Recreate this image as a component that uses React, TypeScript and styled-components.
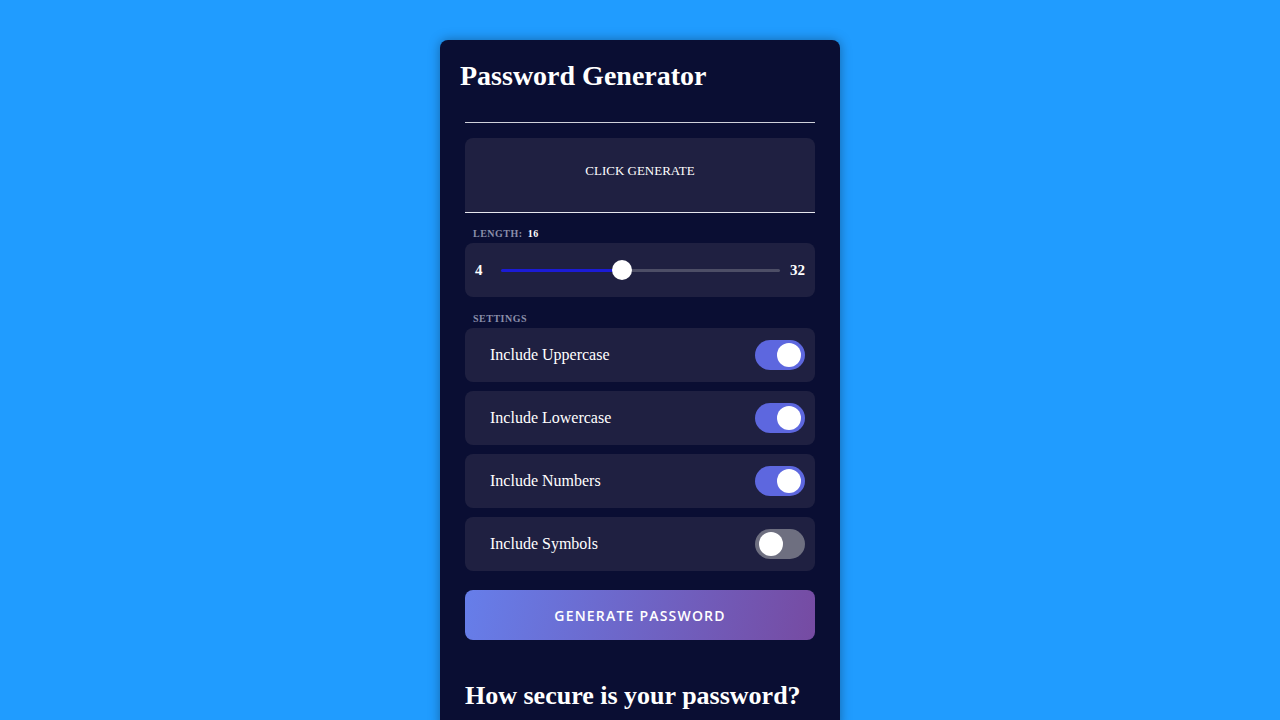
import * as React from "react";
import { useState } from "react";
import styled, { createGlobalStyle } from "styled-components";

const GlobalStyle = createGlobalStyle`
  body {
    margin: 0;
    background: #209cff;
    font-family: "Liberation Serif", "Times New Roman", serif;
    color: #fff;
  }
`;

const Page = styled.div`
  display: flex;
  justify-content: center;
  padding-top: 40px;
  min-height: 680px;
`;

const Card = styled.div`
  width: 400px;
  box-sizing: border-box;
  padding: 20px;
  background: #0a0e33;
  border-radius: 8px;
  box-shadow: 0 0 12px rgba(0, 0, 0, 0.35);
`;

const Title = styled.h1`
  margin: 0;
  font-size: 28px;
  line-height: 32px;
`;

const Body = styled.div`
  padding: 0 5px;
`;

const ResultWrap = styled.div`
  margin-top: 30px;
  border-top: 1px solid #cfd0da;
  padding-top: 15px;
`;

const Result = styled.div`
  height: 75px;
  box-sizing: border-box;
  padding-bottom: 9px;
  display: flex;
  align-items: center;
  justify-content: center;
  background: #1f2041;
  border-radius: 8px 8px 0 0;
  border-bottom: 1px solid #e6e6ee;
  font-size: 13px;
`;

const SectionLabel = styled.div<{ spaced?: boolean }>`
  margin: ${({ spaced }) => (spaced ? "16px 0 3px 8px" : "15px 0 3px 8px")};
  font-size: 10px;
  line-height: 12px;
  font-weight: bold;
  letter-spacing: 0.5px;
  color: #8b8eaa;

  span {
    color: #fff;
    margin-left: 2px;
  }
`;

const Panel = styled.div`
  height: 54px;
  display: flex;
  align-items: center;
  background: #1f2041;
  border-radius: 8px;
  box-sizing: border-box;
`;

const SliderPanel = styled(Panel)`
  padding: 0 10px;
  font-size: 15px;
  font-weight: bold;
`;

const Range = styled.input`
  flex: 1;
  margin: 0 10px 0 18px;
  height: 3px;
  appearance: none;
  -webkit-appearance: none;
  border-radius: 2px;
  outline: none;

  &::-webkit-slider-thumb {
    -webkit-appearance: none;
    width: 20px;
    height: 20px;
    border-radius: 50%;
    background: #fff;
    cursor: pointer;
  }
`;

const Settings = styled.div`
  display: flex;
  flex-direction: column;
  gap: 9px;
`;

const SettingRow = styled(Panel)`
  justify-content: space-between;
  padding: 0 10px 0 25px;
  font-size: 16px;
`;

const Toggle = styled.button<{ on: boolean }>`
  position: relative;
  width: 50px;
  height: 30px;
  padding: 0;
  border: none;
  border-radius: 15px;
  background: ${({ on }) => (on ? "#5d67df" : "#6e6f80")};
  cursor: pointer;

  &::after {
    content: "";
    position: absolute;
    top: 3px;
    left: ${({ on }) => (on ? "22px" : "4px")};
    width: 24px;
    height: 24px;
    border-radius: 50%;
    background: #fff;
  }
`;

const GenerateButton = styled.button`
  width: 100%;
  height: 50px;
  margin-top: 19px;
  border: none;
  border-radius: 8px;
  background: linear-gradient(100deg, #667eea 0%, #764ba2 100%);
  color: #fff;
  font-family: "Open Sans", "DejaVu Sans", sans-serif;
  font-size: 14px;
  font-weight: 600;
  letter-spacing: 1.2px;
  cursor: pointer;
`;

const Subtitle = styled.h2`
  margin: 41px 0 0;
  font-size: 26px;
  line-height: 30px;
`;

const options = [
  { id: "upper", label: "Include Uppercase", on: true },
  { id: "lower", label: "Include Lowercase", on: true },
  { id: "numbers", label: "Include Numbers", on: true },
  { id: "symbols", label: "Include Symbols", on: false },
];

export default function App() {
  const [length, setLength] = useState(16);
  const [flags, setFlags] = useState(options.map((o) => o.on));
  const pct = ((length - 4) / 28) * 100;

  return (
    <Page>
      <GlobalStyle />
      <Card>
        <Title>Password Generator</Title>
        <Body>
          <ResultWrap>
            <Result>CLICK GENERATE</Result>
          </ResultWrap>

          <SectionLabel>
            LENGTH: <span>{length}</span>
          </SectionLabel>
          <SliderPanel>
            4
            <Range
              type="range"
              min={4}
              max={32}
              value={length}
              onChange={(e) => setLength(Number(e.target.value))}
              style={{
                background: `linear-gradient(to right, #1b1bd6 ${pct}%, #4d4e66 ${pct}%)`,
              }}
            />
            32
          </SliderPanel>

          <SectionLabel spaced>SETTINGS</SectionLabel>
          <Settings>
            {options.map((o, i) => (
              <SettingRow key={o.id}>
                {o.label}
                <Toggle
                  on={flags[i]}
                  onClick={() =>
                    setFlags((f) => f.map((v, j) => (j === i ? !v : v)))
                  }
                />
              </SettingRow>
            ))}
          </Settings>

          <GenerateButton>GENERATE PASSWORD</GenerateButton>

          <Subtitle>How secure is your password?</Subtitle>
        </Body>
      </Card>
    </Page>
  );
}
